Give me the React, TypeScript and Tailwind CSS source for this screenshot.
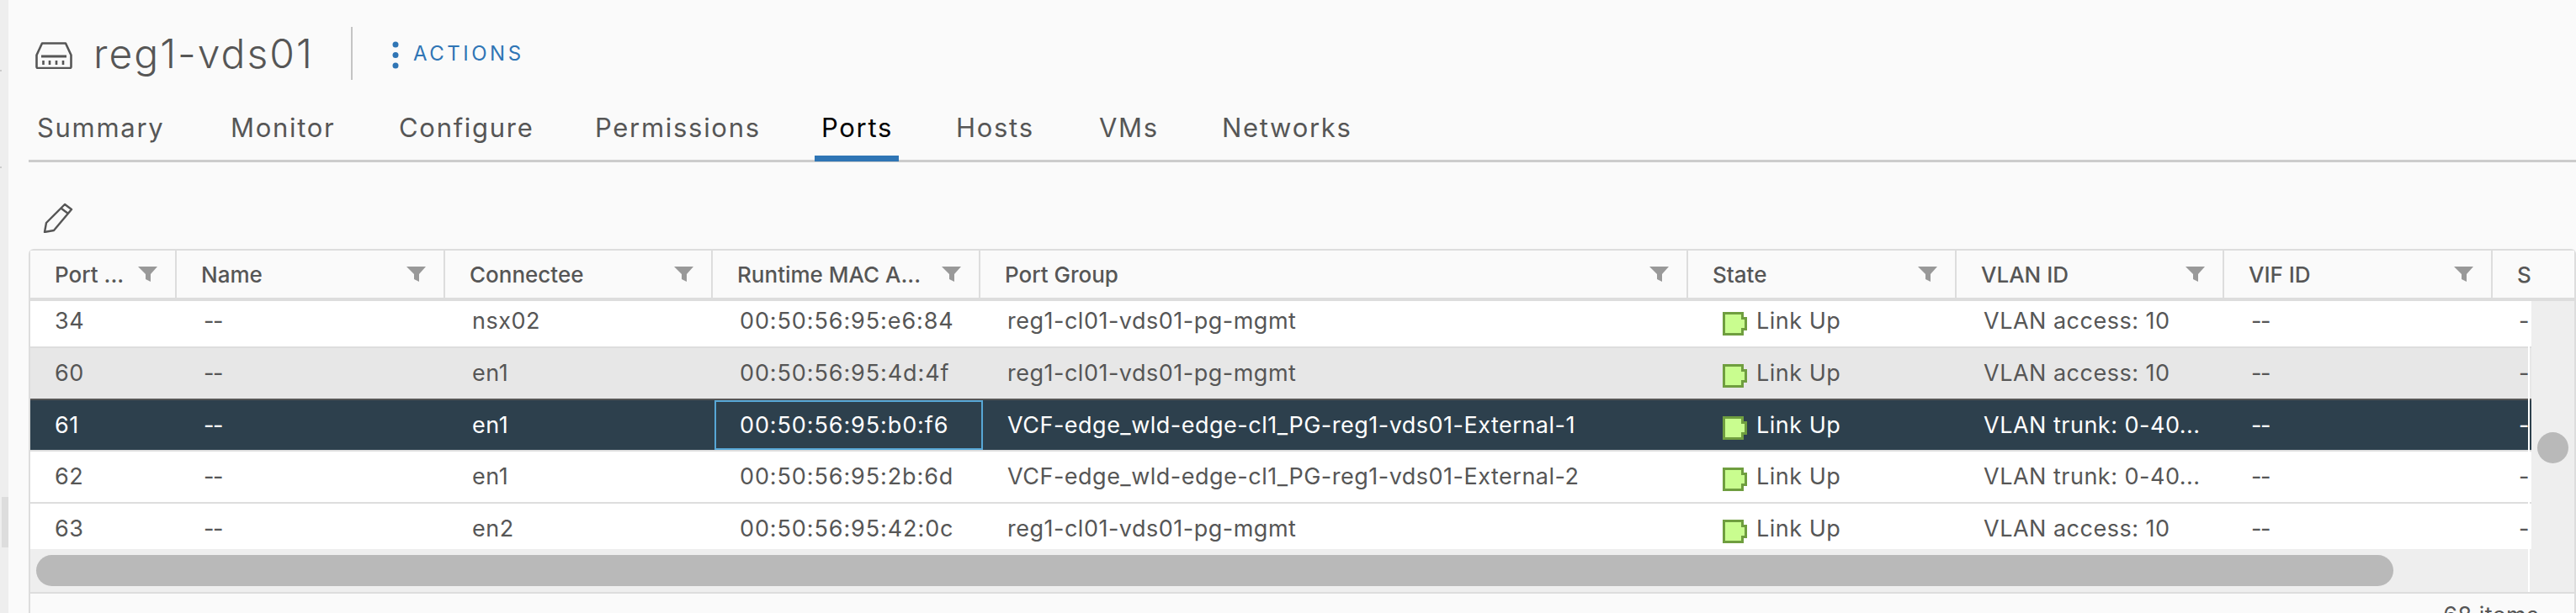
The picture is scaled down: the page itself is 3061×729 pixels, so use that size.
import React from 'react';

const columns = [
  { label: 'Port ...', width: 'w-[174px]', filter: true },
  { label: 'Name', width: 'w-[319px]', filter: true },
  { label: 'Connectee', width: 'w-[318px]', filter: true },
  { label: 'Runtime MAC A...', width: 'w-[318px]', filter: true },
  { label: 'Port Group', width: 'w-[841px]', filter: true },
  { label: 'State', width: 'w-[319px]', filter: true },
  { label: 'VLAN ID', width: 'w-[318px]', filter: true },
  { label: 'VIF ID', width: 'w-[319px]', filter: true },
  { label: 'S', width: 'w-[97px]', filter: false },
];

const tabs = [
  { label: 'Summary', width: 'w-[230px]' },
  { label: 'Monitor', width: 'w-[200px]' },
  { label: 'Configure', width: 'w-[233px]' },
  { label: 'Permissions', width: 'w-[269px]' },
  { label: 'Ports', width: 'w-[160px]', active: true },
  { label: 'Hosts', width: 'w-[170px]' },
  { label: 'VMs', width: 'w-[146px]' },
  { label: 'Networks', width: 'w-[200px]' },
];

const rows = [
  { port: '34', conn: 'nsx02', mac: '00:50:56:95:e6:84', group: 'reg1-cl01-vds01-pg-mgmt', vlan: 'VLAN access: 10', h: 'h-[62px]', tone: 'bg-white border-[#dddddd] text-[#565656]' },
  { port: '60', conn: 'en1', mac: '00:50:56:95:4d:4f', group: 'reg1-cl01-vds01-pg-mgmt', vlan: 'VLAN access: 10', h: 'h-[62px]', tone: 'bg-[#e7e7e7] border-[#565656] text-[#565656]' },
  { port: '61', conn: 'en1', mac: '00:50:56:95:b0:f6', group: 'VCF-edge_wld-edge-cl1_PG-reg1-vds01-External-1', vlan: 'VLAN trunk: 0-40...', h: 'h-[61px]', tone: 'bg-[#2d404d] border-[#dddddd] text-white', focus: true },
  { port: '62', conn: 'en1', mac: '00:50:56:95:2b:6d', group: 'VCF-edge_wld-edge-cl1_PG-reg1-vds01-External-2', vlan: 'VLAN trunk: 0-40...', h: 'h-[62px]', tone: 'bg-white border-[#dddddd] text-[#565656]' },
  { port: '63', conn: 'en2', mac: '00:50:56:95:42:0c', group: 'reg1-cl01-vds01-pg-mgmt', vlan: 'VLAN access: 10', h: 'h-[62px]', tone: 'bg-white border-[#dddddd] text-[#565656]' },
];

const FilterIcon = () => (
  <svg viewBox="0 0 23 18" className="w-[23px] h-[18px] shrink-0 fill-[#999999]">
    <path d="M0 0h23l-8 9v9l-6-3V9z" />
  </svg>
);

const LinkUp = () => (
  <svg viewBox="0 0 29 28" className="w-[29px] h-[28px] shrink-0 mt-[19px]">
    <path d="M1.500 1.500h22v6h4v13h-4v6h-22z" fill="#c9fd8f" stroke="#6f9e3f" strokeWidth="3" />
  </svg>
);

export default function App() {
  return (
    <div className="flex w-[3061px] h-[729px] overflow-hidden bg-[#fafafa] font-['Inter','Liberation_Sans',sans-serif] text-[#565656]">
      {/* side panel edge */}
      <div className="w-[10px] shrink-0 bg-[#eeeeee] flex flex-col">
        <div className="w-[2px] h-[2px] mt-[83px] bg-[#cccccc]" />
        <div className="w-[2px] h-[2px] mt-[113px] bg-[#cccccc]" />
        <div className="w-[8px] h-[60px] mt-[391px] ml-[2px] bg-[#dddddd]" />
      </div>

      <div className="flex-1 min-w-0 flex flex-col pl-[24px]">
        <div className="flex items-center h-[63px] shrink-0 mt-[32px] pl-[8px]">
          <svg viewBox="0 0 44 32" className="w-[44px] h-[32px] mt-[4px] fill-none stroke-[#565656]">
            <path d="M8 1.500h28l6.500 14v14a1.500 1.500 0 0 1-1.500 1.500H3a1.500 1.500 0 0 1-1.500-1.500v-14z" strokeWidth="2.6" strokeLinejoin="round" />
            <path d="M7 17h30" strokeWidth="3" />
            <path d="M9.500 22v5M17 22v5M25 22v5M33 22v5" strokeWidth="2.6" />
          </svg>
          <span className="ml-[25px] w-[306px] text-[48px] leading-none font-light tracking-[2px] whitespace-nowrap">reg1-vds01</span>
          <div className="w-[2px] h-[63px] bg-[#c4c4c4]" />
          <svg viewBox="0 0 8 33" className="ml-[47px] mt-[4px] w-[8px] h-[33px] fill-[#2f75b5]">
            <circle cx="4" cy="4" r="3.500" />
            <circle cx="4" cy="16.500" r="3.500" />
            <circle cx="4" cy="29" r="3.500" />
          </svg>
          <span className="ml-[17px] text-[24px] leading-none tracking-[3.5px] text-[#2f75b5]">ACTIONS</span>
        </div>

        <div className="flex h-[98px] shrink-0 items-stretch border-b-[3px] border-[#cccccc]">
          {tabs.map(t => (
            <div key={t.label} className={`${t.width} shrink-0 relative pl-[10px] pt-[35px] text-[31px] leading-[44px] tracking-[1.7px] whitespace-nowrap ${t.active ? 'text-black' : 'text-[#565656]'}`}>
              {t.label}
              {t.active && <div className="absolute left-[2px] w-[100px] bottom-[-2px] h-[7px] bg-[#2f75b5]" />}
            </div>
          ))}
        </div>

        <div className="h-[103px] shrink-0 pl-[16px] pt-[48px]">
          <svg viewBox="0 0 37 36" className="w-[37px] h-[36px] fill-none stroke-[#565656]" strokeWidth="2.4">
            <path d="M27 2l8 6-21 25-11 2 2-11z" strokeLinejoin="round" />
            <path d="M23 7l8 6" />
          </svg>
        </div>

        <div className="w-[3027px] h-[433px] shrink-0 border-2 border-[#dddddd] rounded-tl-[6px] rounded-tr-[6px] border-b-0 flex flex-col">
          <div className="flex h-[60px] shrink-0 border-b-4 border-[#dddddd] bg-[#fafafa]">
            {columns.map((c, i) => (
              <div key={c.label} className={`${c.width} shrink-0 h-full flex items-center justify-between pl-[29px] pr-[21px] text-[26px] font-medium whitespace-nowrap ${i < columns.length - 1 ? 'border-r-2 border-[#dddddd]' : ''}`}>
                <span>{c.label}</span>
                {c.filter && <FilterIcon />}
              </div>
            ))}
          </div>

          <div className="flex h-[346px] shrink-0">
            <div className="w-[2972px] shrink-0 flex flex-col relative">
              <div className="h-[295px] overflow-hidden shrink-0">
                <div className="-mt-[6px]">
                  {rows.map(r => (
                    <div key={r.port} className={`flex ${r.h} border-b-2 text-[27px] tracking-[0.5px] ${r.tone} overflow-hidden`}>
                      <div className="w-[174px] pl-[29px] shrink-0 leading-[60px]">{r.port}</div>
                      <div className="w-[319px] pl-[32px] shrink-0 leading-[60px] tracking-[-1.5px]">--</div>
                      <div className="w-[318px] pl-[32px] shrink-0 leading-[60px]">{r.conn}</div>
                      <div className={r.focus
                        ? 'w-[319px] ml-[2px] -mr-[3px] pl-[28px] shrink-0 leading-[56px] tracking-[0.9px] border-2 border-[#57a7d6] relative'
                        : 'w-[318px] pl-[32px] shrink-0 leading-[60px] tracking-[0.9px]'}>{r.mac}</div>
                      <div className="w-[841px] pl-[32px] shrink-0 leading-[60px] whitespace-nowrap">{r.group}</div>
                      <div className="w-[319px] pl-[41px] shrink-0 flex items-start h-[60px] gap-[11px]"><LinkUp /><span className="leading-[60px]">Link Up</span></div>
                      <div className="w-[318px] pl-[32px] shrink-0 leading-[60px] whitespace-nowrap">{r.vlan}</div>
                      <div className="w-[319px] pl-[32px] shrink-0 leading-[60px] tracking-[-1.5px]">--</div>
                      <div className="flex-1 min-w-0 pl-[31px] leading-[60px] overflow-hidden">--</div>
                    </div>
                  ))}
                </div>
              </div>
              <div className="flex-1 bg-[#eeeeee] pl-[7px] pt-[7px]">
                <div className="w-[2801px] h-[37px] rounded-full bg-[#b9b9b9]" />
              </div>
              <div className="absolute right-[2px] top-[54px] bottom-0 w-[2px] bg-white" />
            </div>
            <div className="flex-1 bg-[#eeeeee] pl-[7px] pt-[156px]">
              <div className="w-[37px] h-[37px] rounded-full bg-[#b9b9b9]" />
            </div>
          </div>

          <div className="border-t-2 border-[#dddddd] flex-1 flex justify-end pr-[42px] pt-[10px] text-[27px] leading-[32px] tracking-[0.5px]">68 items</div>
        </div>
      </div>
    </div>
  );
}
